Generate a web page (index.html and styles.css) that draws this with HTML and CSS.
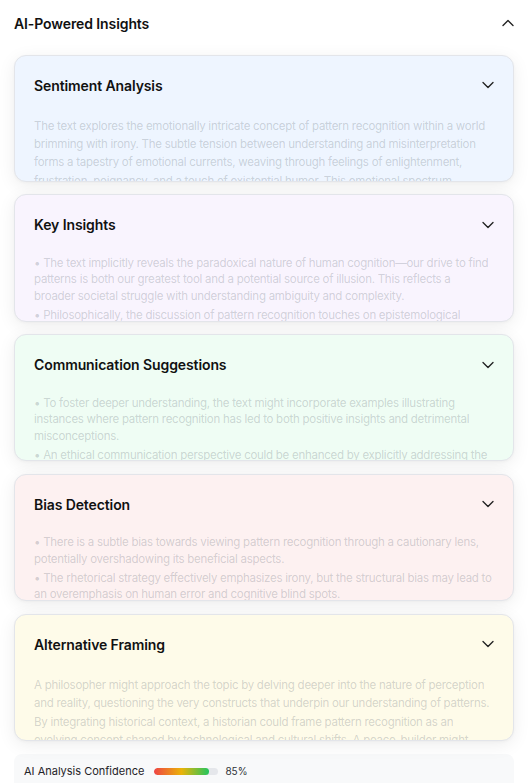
FILE: index.html
```html
<!DOCTYPE html>
<html lang="en">
<head>
<meta charset="utf-8">
<title>AI-Powered Insights</title>
<link rel="stylesheet" href="styles.css">
</head>
<body>
<div class="panel">
  <div class="panel-header">
    <h2 class="panel-title">AI-Powered Insights</h2>
    <svg class="icon" viewBox="0 0 24 24" width="20" height="20"><path d="m18 15-6-6-6 6"/></svg>
  </div>
  <div class="cards">
    <section class="card card-blue">
      <div class="card-head">
        <h3 class="card-title">Sentiment Analysis</h3>
        <svg class="icon" viewBox="0 0 24 24" width="20" height="20"><path d="m6 9 6 6 6-6"/></svg>
      </div>
      <p class="card-text">The text explores the emotionally intricate concept of pattern recognition within a world brimming with irony. The subtle tension between understanding and misinterpretation forms a tapestry of emotional currents, weaving through feelings of enlightenment, frustration, poignancy, and a touch of existential humor. This emotional spectrum encourages readers to reflect on their own perceptions.</p>
    </section>
    <section class="card card-purple">
      <div class="card-head">
        <h3 class="card-title">Key Insights</h3>
        <svg class="icon" viewBox="0 0 24 24" width="20" height="20"><path d="m6 9 6 6 6-6"/></svg>
      </div>
      <ul class="card-list">
        <li>• The text implicitly reveals the paradoxical nature of human cognition—our drive to find patterns is both our greatest tool and a potential source of illusion. This reflects a broader societal struggle with understanding ambiguity and complexity.</li>
        <li>• Philosophically, the discussion of pattern recognition touches on epistemological questions about how we come to know what we know.</li>
      </ul>
    </section>
    <section class="card card-green">
      <div class="card-head">
        <h3 class="card-title">Communication Suggestions</h3>
        <svg class="icon" viewBox="0 0 24 24" width="20" height="20"><path d="m6 9 6 6 6-6"/></svg>
      </div>
      <ul class="card-list">
        <li>• To foster deeper understanding, the text might incorporate examples illustrating instances where pattern recognition has led to both positive insights and detrimental misconceptions.</li>
        <li>• An ethical communication perspective could be enhanced by explicitly addressing the responsibility of interpreting patterns.</li>
      </ul>
    </section>
    <section class="card card-red">
      <div class="card-head">
        <h3 class="card-title">Bias Detection</h3>
        <svg class="icon" viewBox="0 0 24 24" width="20" height="20"><path d="m6 9 6 6 6-6"/></svg>
      </div>
      <ul class="card-list">
        <li>• There is a subtle bias towards viewing pattern recognition through a cautionary lens, potentially overshadowing its beneficial aspects.</li>
        <li>• The rhetorical strategy effectively emphasizes irony, but the structural bias may lead to an overemphasis on human error and cognitive blind spots.</li>
      </ul>
    </section>
    <section class="card card-yellow">
      <div class="card-head">
        <h3 class="card-title">Alternative Framing</h3>
        <svg class="icon" viewBox="0 0 24 24" width="20" height="20"><path d="m6 9 6 6 6-6"/></svg>
      </div>
      <p class="card-text">A philosopher might approach the topic by delving deeper into the nature of perception and reality, questioning the very constructs that underpin our understanding of patterns. By integrating historical context, a historian could frame pattern recognition as an evolving concept shaped by technological and cultural shifts. A peace-builder might emphasize shared understanding.</p>
    </section>
  </div>
  <div class="confidence">
    <span class="confidence-label">AI Analysis Confidence</span>
    <div class="meter"><div class="meter-fill" style="width:85%"></div></div>
    <span class="confidence-value">85%</span>
  </div>
</div>
</body>
</html>
```

FILE: styles.css
```css
* { box-sizing: border-box; }
html, body { margin: 0; padding: 0; background: #ffffff; }
body {
  font-family: Inter, "Noto Sans", "Liberation Sans", sans-serif;
  color: #111827;
  overflow: hidden;
}
.panel { width: 528px; }
.panel-header {
  height: 46px;
  display: flex;
  align-items: center;
  justify-content: space-between;
  padding: 0 10px 0 14px;
}
.panel-title {
  margin: 0;
  font-size: 14px;
  font-weight: 600;
  letter-spacing: -0.1px;
  color: #111111;
}
.icon {
  fill: none;
  stroke: #222222;
  stroke-width: 1.6;
  stroke-linecap: round;
  stroke-linejoin: round;
  flex: none;
}
.cards {
  display: flex;
  flex-direction: column;
  gap: 12.4px;
  padding: 8.5px 14px 0;
}
.card {
  height: 127.4px;
  overflow: hidden;
  border: 1px solid #e3e5ea;
  border-radius: 12px;
  padding: 17.5px 15px 0 19px;
  box-shadow: 0 4px 18px rgba(0, 0, 0, 0.07), 0 1px 3px rgba(0, 0, 0, 0.03);
}
.card-blue { background: #eef5ff; }
.card-purple { background: #f9f4fe; }
.card-green { background: #effdf4; }
.card-red { background: #fdf1f1; }
.card-yellow { background: #fefbe9; }
.card-head {
  height: 24px;
  display: flex;
  align-items: center;
  justify-content: space-between;
}
.card-title {
  margin: 0;
  font-size: 14px;
  font-weight: 600;
  letter-spacing: -0.1px;
  color: #111111;
}
.card-text {
  margin: 20px 6px 0 0;
  font-size: 11.5px;
  letter-spacing: -0.27px;
  line-height: 18.2px;
  color: rgba(75, 85, 99, 0.24);
}
.card-list {
  list-style: none;
  margin: 18px 6px 0 0;
  padding: 0;
  font-size: 11.5px;
  letter-spacing: -0.27px;
  line-height: 16.5px;
  color: rgba(75, 85, 99, 0.24);
}
.card-list li { margin-bottom: 2.5px; }
.confidence {
  margin: 13px 14px 0;
  background: #f8f9fa;
  border-radius: 8px 8px 0 0;
  padding: 10px 10px 12px;
  display: flex;
  align-items: center;
  height: 36px;
}
.confidence-label {
  font-size: 11px;
  line-height: 16px;
  color: #1f2328;
}
.meter {
  width: 64px;
  height: 7px;
  border-radius: 4px;
  background: #e5e7eb;
  margin-left: 10px;
  overflow: hidden;
}
.meter-fill {
  height: 100%;
  border-radius: 4px;
  background: linear-gradient(90deg, #ef4444, #eab308 50%, #22c55e);
}
.confidence-value {
  margin-left: 7px;
  font-size: 10px;
  color: #2f3338;
}
```
